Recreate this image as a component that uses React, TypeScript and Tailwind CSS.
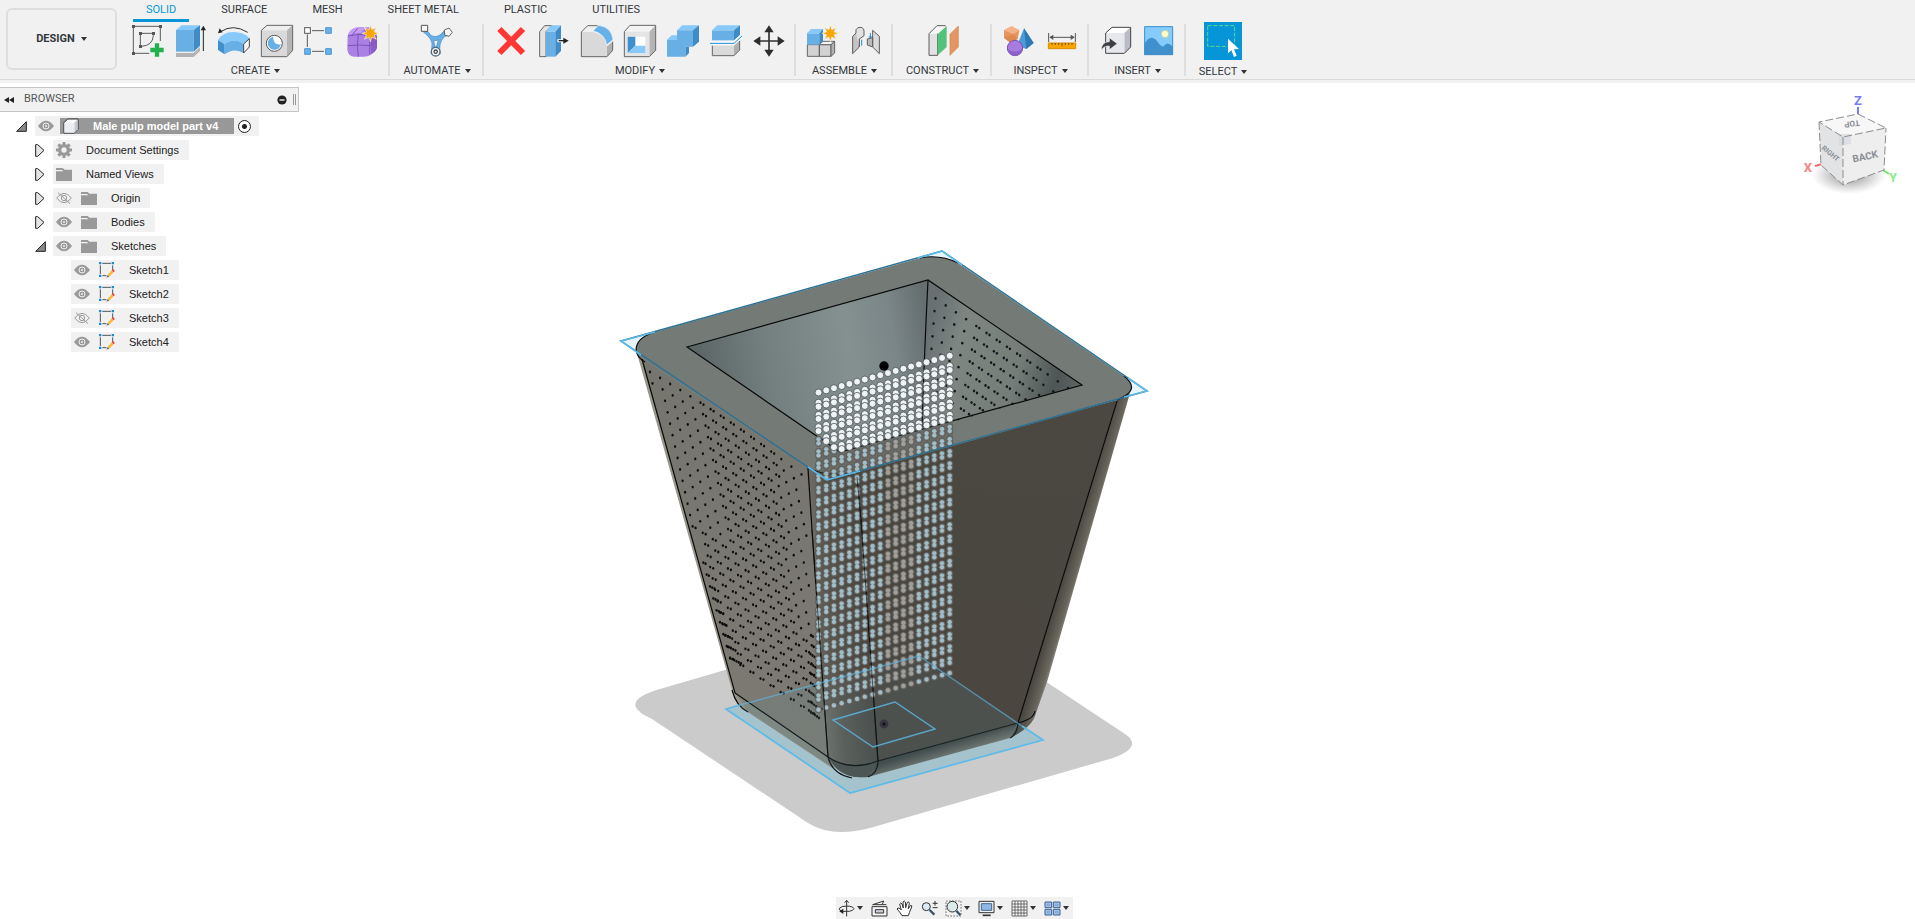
import React from 'react';

interface IconProps {
  children: React.ReactNode;
}

// Ribbon icons are drawn on a 96 unit grid and shown at 32px
const RibbonIcon: React.FC<IconProps> = ({ children }) => (
  <svg viewBox="0 0 96 96" className="size-8 overflow-visible" aria-hidden="true">
    {children}
  </svg>
);

const Caret = () => (
  <svg viewBox="0 0 6 4" className="h-1 w-1.5 shrink-0" aria-hidden="true">
    <path d="M0 0H6L3 4Z" fill="#333" />
  </svg>
);

const starPoints = (cx: number, cy: number, outer: number, inner: number) =>
  Array.from({ length: 16 }, (_, i) => {
    const r = i % 2 === 0 ? outer : inner;
    const a = (i * Math.PI) / 8 - Math.PI / 2;
    return `${cx + r * Math.cos(a)},${cy + r * Math.sin(a)}`;
  }).join(' ');

const Star = ({ cx, cy }: { cx: number; cy: number }) => (
  <polygon points={starPoints(cx, cy, 25, 12)} fill="#f9a602" stroke="#f1f1f1" strokeWidth="2" />
);

const SketchTool = () => (
  <RibbonIcon>
    <path d="M8 4H85V48M4 8V85H52M25 60V25H64V32Q62 62 28 64" fill="none" stroke="#5c5c5c" strokeWidth="3" />
    <path d="M0 0h9v9h-9zM81 0h9v9h-9zM0 81h9v9h-9zM21 21h9v9h-9zM60 21h9v9h-9zM21 60h9v9h-9z" fill="#555" />
    <path d="M75 54V96M54 75H96" stroke="#f1f1f1" strokeWidth="17" />
    <path d="M75 55V95M55 75H95" stroke="#23b14d" strokeWidth="13" />
  </RibbonIcon>
);

const ExtrudeTool = () => (
  <RibbonIcon>
    <path d="M3 84H56L75 66V78L56 96H3Z" fill="#b3b3b3" />
    <path d="M3 15H56V80H3Z" fill="#67afe5" />
    <path d="M3 15L20 1H75L56 15Z" fill="#87c9fb" />
    <path d="M56 15L75 1V62L56 80Z" fill="#3f8bc8" />
    <path d="M85 78V12" stroke="#222" strokeWidth="3" />
    <path d="M85 2L77 16H93Z" fill="#222" />
  </RibbonIcon>
);

const RevolveTool = () => (
  <RibbonIcon>
    <path d="M8 20Q45 -5 89 22" fill="none" stroke="#333" strokeWidth="3" />
    <path d="M0 25L5 10L14 22Z" fill="#222" />
    <path d="M0 45Q12 22 46 21Q78 21 95 40L77 57Q48 36 20 58Z" fill="#87c9fb" />
    <path d="M0 45L20 58V88L0 75Z" fill="#3f8fcf" />
    <path d="M20 58Q48 36 77 57V85Q50 66 20 88Z" fill="#67afe5" />
    <path d="M77 57L94 41V66L77 84Z" fill="#f7f7f7" stroke="#444" strokeWidth="3" />
  </RibbonIcon>
);

const HoleTool = () => (
  <RibbonIcon>
    <path d="M1 16L18 1H95L78 16Z" fill="#eee" />
    <path d="M78 16L95 1V76L78 95Z" fill="#b5b5b5" />
    <path d="M1 16H78V95H1Z" fill="#d9d9d9" />
    <path d="M1 16L18 1H95V76L78 95H1Z" fill="none" stroke="#666" strokeWidth="3" />
    <circle cx="40" cy="55" r="24" fill="#fff" stroke="#555" strokeWidth="3" />
    <path d="M36 35A20 20 0 1 0 60 58Q38 62 36 35Z" fill="#67afe5" />
  </RibbonIcon>
);

const PatternTool = () => (
  <RibbonIcon>
    <path d="M24 17H60M10 28V66M24 79H60" stroke="#5c5c5c" strokeWidth="3" />
    <rect x="2" y="8" width="17" height="17" fill="#fff" stroke="#555" strokeWidth="3" />
    <path d="M65 8h17v17h-17zM2 71h17v17h-17zM65 71h17v17h-17z" fill="#67b1ec" stroke="#4d96d0" strokeWidth="3" />
  </RibbonIcon>
);

const FormTool = () => (
  <RibbonIcon>
    <path d="M2 34Q4 20 16 12Q26 6 40 7H66Q84 10 90 34V68Q88 78 76 86Q64 96 46 95H22Q4 94 1 74Z" fill="#ab80e4" />
    <path d="M70 34Q88 26 90 34V68Q86 80 72 86Z" fill="#8a5cc4" />
    <path d="M4 30Q8 14 26 8H62Q48 12 40 24Q16 24 4 30Z" fill="#c49cf6" />
    <path d="M3 33Q36 24 68 32V88M34 26Q28 60 34 95M2 62Q40 58 70 62L90 48M52 26L62 10M16 29L32 10" fill="none" stroke="#7f52b8" strokeWidth="3" />
    <Star cx={70} cy={25} />
  </RibbonIcon>
);

const AutomateTool = () => (
  <RibbonIcon>
    <path d="M8 14Q22 16 28 30Q44 40 60 28Q68 14 80 16L84 30Q68 32 62 46Q56 56 56 72L58 86H30L32 72Q36 54 28 42Q20 30 8 22Z" fill="#67afe5" stroke="#4288bf" strokeWidth="2" />
    <path d="M38 46Q44 48 52 45L46 66H42Z" fill="#f1f1f1" stroke="#4288bf" strokeWidth="2" />
    <path d="M1 1H20V19H1Z" fill="#f6f6f6" stroke="#555" strokeWidth="3" />
    <path d="M70 15L84 9L94 22L84 34L71 30Z" fill="#f6f6f6" stroke="#666" strokeWidth="3" />
    <circle cx="44" cy="80" r="13" fill="#fff" stroke="#4b6b85" strokeWidth="4" />
    <circle cx="44" cy="80" r="5" fill="none" stroke="#444" strokeWidth="4" />
  </RibbonIcon>
);

const DeleteTool = () => (
  <RibbonIcon>
    <path d="M13 12L84 84M84 12L13 84" stroke="#fd3735" strokeWidth="18" />
  </RibbonIcon>
);

const PressPullTool = () => (
  <RibbonIcon>
    <path d="M5 20L20 2H42L24 20V95H5Z" fill="#e3e3e3" stroke="#666" strokeWidth="3" />
    <path d="M24 20H52V95H24Z" fill="#67afe5" />
    <path d="M24 20L40 1H69L52 20Z" fill="#87c9fb" />
    <path d="M52 20L69 1V78L52 95Z" fill="#3f8bc8" />
    <path d="M58 47H84" stroke="#f8f8f8" strokeWidth="9" />
    <path d="M62 47H80" stroke="#222" strokeWidth="4" />
    <path d="M76 38L92 47L76 56Z" fill="#222" />
  </RibbonIcon>
);

const FilletTool = () => (
  <RibbonIcon>
    <path d="M1 20L18 2H50L34 22Z" fill="#f0f0f0" />
    <path d="M1 21H34Q74 28 78 64V95H1Z" fill="#d9d9d9" />
    <path d="M78 64L95 50V76L78 95Z" fill="#b0b0b0" />
    <path d="M50 2H20L1 21V95H78L95 76V50" fill="none" stroke="#666" strokeWidth="3" />
    <path d="M36 18L52 1Q92 6 96 44L77 60Q72 26 36 18Z" fill="#67b1e8" stroke="#f8f8f8" strokeWidth="2" />
  </RibbonIcon>
);

const ShellTool = () => (
  <RibbonIcon>
    <path d="M1 20L18 1H95L76 20Z" fill="#f3f3f3" />
    <path d="M76 20L95 1V76L76 95Z" fill="#b5b5b5" />
    <path d="M1 20H76V95H1Z" fill="#e4e4e4" />
    <path d="M1 20L18 1H95V76L76 95H1Z" fill="none" stroke="#666" strokeWidth="3" />
    <path d="M11 35H64V84H11Z" fill="#fff" />
    <path d="M11 35H34V62L11 84Z" fill="#3f8fcf" />
    <path d="M11 84L34 62H64V84Z" fill="#87c9fb" />
  </RibbonIcon>
);

const CombineTool = () => (
  <RibbonIcon>
    <path d="M30 16L46 1H96L78 16ZM0 44L14 31H30V44Z" fill="#87c9fb" />
    <path d="M78 16L96 1V50L78 65ZM55 65H66V84L55 95Z" fill="#3f8bc8" />
    <path d="M0 44H30V16H78V65H55V95H0Z" fill="#67afe5" />
  </RibbonIcon>
);

const SplitTool = () => (
  <RibbonIcon>
    <path d="M6 62H72V92H6Z" fill="#dadada" />
    <path d="M72 62L89 46V74L72 92Z" fill="#b0b0b0" />
    <path d="M7 62V92H72L89 75V48" fill="none" stroke="#666" strokeWidth="3" />
    <path d="M6 16H72V46H6Z" fill="#67afe5" />
    <path d="M6 16L22 1H90L72 16Z" fill="#87c9fb" />
    <path d="M72 16L90 1V30L72 46Z" fill="#3f8bc8" />
    <path d="M0 54H72L96 32" fill="none" stroke="#fafafa" strokeWidth="10" />
    <path d="M0 55H72L96 33" fill="none" stroke="#1a8ed8" strokeWidth="3" />
  </RibbonIcon>
);

const MoveTool = () => (
  <RibbonIcon>
    <path d="M48 14V82M14 48H82" stroke="#333" strokeWidth="5" />
    <path d="M48 1L62 22H34ZM48 95L62 74H34ZM1 48L22 34V62ZM95 48L74 34V62Z" fill="#2e2e2e" />
  </RibbonIcon>
);

const ComponentTool = () => (
  <RibbonIcon>
    <path d="M1 59H37V94H1ZM37 59H72V94H37Z" fill="#d2d2d2" stroke="#666" strokeWidth="3" />
    <path d="M37 59L48 49H83L72 59Z" fill="#f3f3f3" stroke="#666" strokeWidth="3" />
    <path d="M72 59L83 49V84L72 94Z" fill="#b0b0b0" stroke="#666" strokeWidth="3" />
    <path d="M0 25H37V59H0Z" fill="#67afe5" />
    <path d="M0 25L12 12H48L37 25Z" fill="#87c9fb" />
    <path d="M37 25L48 12V47L37 59Z" fill="#3f8bc8" />
    <Star cx={70} cy={25} />
  </RibbonIcon>
);

const JointTool = () => (
  <RibbonIcon>
    <path d="M8 34L28 14V66L8 86Z" fill="#c4c4c4" stroke="#5c5c5c" strokeWidth="3" />
    <path d="M18 24V14Q22 6 32 7Q43 9 42 20V32L28 42V66" fill="#e1e1e1" stroke="#5c5c5c" strokeWidth="3" />
    <path d="M68 16L88 34V86L68 66Z" fill="#dcdcdc" stroke="#5c5c5c" strokeWidth="3" />
    <path d="M68 38L52 42V60L68 66Z" fill="#bcbcbc" stroke="#5c5c5c" strokeWidth="3" />
    <path d="M35 44V62M61 24V40M56 36H66" stroke="#1a8ed8" strokeWidth="3" />
  </RibbonIcon>
);

const ConstructTool = () => (
  <RibbonIcon>
    <path d="M6 26L30 2H56L32 26V91H6Z" fill="#e2e2e2" />
    <path d="M6 26H32L56 2H30Z" fill="#f7f7f7" />
    <path d="M32 26V91H6V26L30 2H56" fill="none" stroke="#5c5c5c" strokeWidth="3" />
    <path d="M32 28L59 3V66L32 91Z" fill="#51c37b" />
    <path d="M69 28L94 3V66L69 91Z" fill="#e59561" stroke="#cf8553" strokeWidth="2" />
  </RibbonIcon>
);

const InterferenceTool = () => (
  <RibbonIcon>
    <path d="M26 4L49 16L44 42L20 52L3 38V16Z" fill="#e8965f" />
    <path d="M26 4L49 16L31 27L3 16Z" fill="#f5b287" />
    <path d="M31 27L44 42L20 52L3 38Z" fill="#dd8950" />
    <path d="M63 10L92 54L70 72L42 62Z" fill="#4b9bd8" />
    <path d="M63 10L92 54L70 72Z" fill="#2e78b4" />
    <circle cx="36" cy="69" r="23" fill="#a87be0" stroke="#7a4fb0" strokeWidth="3" />
    <path d="M14 73Q36 86 58 73Q54 92 36 92Q18 92 14 73Z" fill="#8d60c8" />
  </RibbonIcon>
);

const MeasureTool = () => (
  <RibbonIcon>
    <path d="M8 24V51M88 24V51M12 37H84" stroke="#555" strokeWidth="3" />
    <path d="M10 37L22 29V45ZM86 37L74 29V45Z" fill="#555" />
    <path d="M7 54H89V71H7Z" fill="#f9a602" stroke="#d98c00" strokeWidth="3" />
    <path d="M18 54V60M28 54V60M38 54V60M48 54V64M58 54V60M68 54V60M78 54V60" stroke="#7a5400" strokeWidth="3" />
  </RibbonIcon>
);

const InsertTool = () => (
  <RibbonIcon>
    <path d="M17 24L36 7H92L73 24Z" fill="#fff" />
    <path d="M73 24L92 7V66L73 85Z" fill="#b9bcc4" />
    <path d="M17 24H73V85H17Z" fill="#e6e8ee" />
    <path d="M17 24L36 7H92V66L73 85H17Z" fill="none" stroke="#444" strokeWidth="3" />
    <path d="M4 76Q4 50 28 50V38L52 56L28 74V63Q12 62 4 76Z" fill="#3c3f44" stroke="#f1f1f1" strokeWidth="2" />
  </RibbonIcon>
);

const CanvasTool = () => (
  <RibbonIcon>
    <path d="M4 4H90V90H4Z" fill="#85cbfc" />
    <path d="M4 56Q26 20 48 56Q56 66 62 64Q74 46 90 66V90H4Z" fill="#3f90cd" />
    <circle cx="66" cy="27" r="11" fill="#fdfbc8" stroke="#b5c98c" strokeWidth="2" />
    <path d="M5 5H89V89H5Z" fill="none" stroke="#3f90cd" strokeWidth="3" />
  </RibbonIcon>
);

const SelectTool = () => (
  <svg viewBox="0 0 114 114" className="size-[38px] bg-[#0696d7]" aria-hidden="true">
    <path d="M11 11H92V73H11Z" fill="none" stroke="#5fd68b" strokeWidth="3" strokeDasharray="12 5" />
    <path d="M72 50V94L82 85L90 105L98 101L90 82L105 81Z" fill="#fff" />
  </svg>
);

interface ToolGroup {
  label: string;
  width: string;
  tools: { name: string; icon: React.ReactNode }[];
}

const groups: ToolGroup[] = [
  {
    label: 'CREATE',
    width: 'min-w-[269px]',
    tools: [
      { name: 'Create Sketch', icon: <SketchTool /> },
      { name: 'Extrude', icon: <ExtrudeTool /> },
      { name: 'Revolve', icon: <RevolveTool /> },
      { name: 'Hole', icon: <HoleTool /> },
      { name: 'Rectangular Pattern', icon: <PatternTool /> },
      { name: 'Create Form', icon: <FormTool /> },
    ],
  },
  { label: 'AUTOMATE', width: 'w-[94px]', tools: [{ name: 'Automated Modeling', icon: <AutomateTool /> }] },
  {
    label: 'MODIFY',
    width: 'min-w-[312px]',
    tools: [
      { name: 'Delete', icon: <DeleteTool /> },
      { name: 'Press Pull', icon: <PressPullTool /> },
      { name: 'Fillet', icon: <FilletTool /> },
      { name: 'Shell', icon: <ShellTool /> },
      { name: 'Combine', icon: <CombineTool /> },
      { name: 'Split Body', icon: <SplitTool /> },
      { name: 'Move', icon: <MoveTool /> },
    ],
  },
  {
    label: 'ASSEMBLE',
    width: 'w-[97px]',
    tools: [
      { name: 'New Component', icon: <ComponentTool /> },
      { name: 'Joint', icon: <JointTool /> },
    ],
  },
  { label: 'CONSTRUCT', width: 'w-[99px]', tools: [{ name: 'Offset Plane', icon: <ConstructTool /> }] },
  {
    label: 'INSPECT',
    width: 'w-[97px]',
    tools: [
      { name: 'Interference', icon: <InterferenceTool /> },
      { name: 'Measure', icon: <MeasureTool /> },
    ],
  },
  {
    label: 'INSERT',
    width: 'w-[97px]',
    tools: [
      { name: 'Insert Derive', icon: <InsertTool /> },
      { name: 'Canvas', icon: <CanvasTool /> },
    ],
  },
];

const tabs = ['SOLID', 'SURFACE', 'MESH', 'SHEET METAL', 'PLASTIC', 'UTILITIES'];

const Toolbar = () => (
  <header className="bg-[#f1f1f1] pb-[3px] font-['Roboto',sans-serif] text-[11px] text-[#33373c]">
    <div className="flex h-20 border-b border-[#dadada] pl-1.5">
      <button className="mt-2 flex h-[62px] w-[111px] items-center justify-center gap-1.5 rounded-md border-2 border-[#dedede] font-bold">
        DESIGN <Caret />
      </button>
      <div className="ml-1 flex flex-col">
        <nav className="flex h-6 items-start gap-[19px] pl-3">
          {tabs.map((tab, i) => (
            <button
              key={tab}
              className={
                i === 0
                  ? 'flex h-[22px] items-start border-b-[3px] border-[#0696d7] px-[13px] pt-1 leading-3 text-[#0696d7]'
                  : 'flex h-[22px] items-start px-[13px] pt-1 leading-3'
              }
            >
              {tab}
            </button>
          ))}
        </nav>
        <div className="flex h-[52px]">
          {groups.map((group) => (
            <div key={group.label} className={`flex flex-col items-center border-r-2 border-[#dedede] pt-px pl-0.5 ${group.width}`}>
              <div className="flex gap-[11px]">
                {group.tools.map((tool) => (
                  <button key={tool.name} aria-label={tool.name}>
                    {tool.icon}
                  </button>
                ))}
              </div>
              <button className="mt-1.5 flex items-center gap-1 leading-4">
                {group.label} <Caret />
              </button>
            </div>
          ))}
          <div className="flex w-[74px] flex-col items-center">
            <button aria-label="Select" className="-mt-0.5">
              <SelectTool />
            </button>
            <button className="mt-1 flex items-center gap-1 leading-4">
              SELECT <Caret />
            </button>
          </div>
        </div>
      </div>
    </div>
  </header>
);

const EyeIcon = ({ hidden }: { hidden?: boolean }) => (
  <svg viewBox="0 0 48 36" className="h-3 w-4 shrink-0" aria-hidden="true">
    {hidden ? (
      <g fill="none" stroke="#999" strokeWidth="3">
        <path d="M2 18Q24 -10 46 18Q24 46 2 18Z" />
        <circle cx="24" cy="18" r="8" />
        <path d="M6 2L42 35" />
      </g>
    ) : (
      <>
        <path d="M0 18Q24 -14 48 18Q24 50 0 18Z" fill="#999" />
        <circle cx="24" cy="18" r="9" fill="none" stroke="#f1f1f1" strokeWidth="3" />
        <circle cx="24" cy="18" r="3" fill="#f1f1f1" />
      </>
    )}
  </svg>
);

const FolderIcon = () => (
  <svg viewBox="0 0 48 39" className="h-[13px] w-4 shrink-0" aria-hidden="true">
    <path d="M0 0H20L26 5H48V39H0V10H22L18 6H0Z" fill="#999" />
  </svg>
);

const GearIcon = () => (
  <svg viewBox="0 0 48 48" className="size-4 shrink-0" aria-hidden="true">
    <circle cx="24" cy="24" r="13" fill="none" stroke="#999" strokeWidth="10" />
    <path d="M24 0V10M24 38V48M0 24H10M38 24H48M7 7L14 14M34 34L41 41M41 7L34 14M7 41L14 34" stroke="#999" strokeWidth="9" />
  </svg>
);

const SketchIcon = () => (
  <svg viewBox="0 0 48 48" className="size-4 shrink-0" aria-hidden="true">
    <path d="M4 10V36M10 4H36M41 10V24M10 41H22" stroke="#555" strokeWidth="3" />
    <path d="M0 0H7V7H0ZM38 0H45V7H38ZM0 38H7V45H0Z" fill="#128de0" />
    <path d="M26 38L38 25L44 31L31 44Z" fill="#fdb93e" />
    <path d="M38 25L42 21L48 27L44 31Z" fill="#ee3f4e" />
    <path d="M26 38L31 44L22 47Z" fill="#777" />
  </svg>
);

const Expander = ({ open }: { open?: boolean }) =>
  open ? (
    <svg viewBox="0 0 33 33" className="size-[11px]" aria-hidden="true">
      <path d="M2 31L31 2V31Z" fill="#888" stroke="#222" strokeWidth="3" />
    </svg>
  ) : (
    <svg viewBox="0 0 30 39" className="h-[13px] w-2.5" aria-hidden="true">
      <path d="M2 2H8L27 19L8 37H2Z" fill="#e4e4e4" stroke="#222" strokeWidth="3" />
    </svg>
  );

interface TreeNode {
  label: string;
  icon: 'gear' | 'folder';
  eye?: 'shown' | 'hidden';
  open?: boolean;
}

const nodes: TreeNode[] = [
  { label: 'Document Settings', icon: 'gear' },
  { label: 'Named Views', icon: 'folder' },
  { label: 'Origin', icon: 'folder', eye: 'hidden' },
  { label: 'Bodies', icon: 'folder', eye: 'shown' },
  { label: 'Sketches', icon: 'folder', eye: 'shown', open: true },
];

const sketches = [
  { label: 'Sketch1', hidden: false },
  { label: 'Sketch2', hidden: false },
  { label: 'Sketch3', hidden: true },
  { label: 'Sketch4', hidden: false },
];

const BrowserPanel = () => (
  <aside className="relative w-[299px] pt-1">
    <div className="flex h-[25px] items-center border border-l-0 border-[#c4c4c4] bg-[#f1f1f1] pr-0.5 pl-1 font-['Roboto',sans-serif] text-[11px] text-[#555]">
      <button aria-label="Collapse browser">
        <svg viewBox="0 0 10 6" className="h-1.5 w-2.5" aria-hidden="true">
          <path d="M5 0V6L0 3ZM10 0V6L5 3Z" fill="#222" />
        </svg>
      </button>
      <h2 className="ml-2.5 flex-1">BROWSER</h2>
      <button aria-label="Browser options">
        <svg viewBox="0 0 10 10" className="size-2.5" aria-hidden="true">
          <circle cx="5" cy="5" r="4.6" fill="#222" />
          <path d="M2.5 5H7.5" stroke="#f1f1f1" strokeWidth="1.4" />
        </svg>
      </button>
      <div className="ml-1.5 h-[11px] w-[3px] border-x border-[#999]" />
    </div>

    <ul className="mt-1 flex flex-col gap-1 font-['Liberation_Sans',Arial,sans-serif] text-[11px] text-[#222]">
      <li className="flex h-5 items-center pl-4">
        <button aria-label="Toggle root" className="w-[19px]">
          <Expander open />
        </button>
        <div className="flex h-5 items-center bg-[#f1f1f1] pr-2 pl-[3px]">
          <EyeIcon />
          <div className="ml-1.5 flex h-4 w-[174px] items-center bg-[#989898] pl-[3px] font-bold text-white">
            <svg viewBox="0 0 48 48" className="size-4" aria-hidden="true">
              <path d="M3 14L14 3H45V34L34 45H3Z" fill="#fff" stroke="#333" strokeWidth="3" />
              <path d="M34 14L44 4V34L34 44Z" fill="#c3c7d2" />
              <path d="M4 15H34V44H4Z" fill="#eceef4" />
            </svg>
            <span className="ml-3.5 whitespace-nowrap">Male pulp model part v4</span>
          </div>
          <input
            type="radio"
            defaultChecked
            aria-label="Activate component"
            className="ml-1 size-[13px] appearance-none rounded-full border border-[#222] bg-[radial-gradient(circle,#222_2px,#fff_3px)]"
          />
        </div>
      </li>
      {nodes.map((node) => (
        <li key={node.label} className="flex h-5 items-center pl-[35px]">
          <button aria-label={`Toggle ${node.label}`} className="w-[18px]">
            <Expander open={node.open} />
          </button>
          <div className="flex h-5 items-center bg-[#f1f1f1] pr-2.5 pl-[3px]">
            {node.eye && (
              <span className="mr-[9px]">
                <EyeIcon hidden={node.eye === 'hidden'} />
              </span>
            )}
            {node.icon === 'gear' ? <GearIcon /> : <FolderIcon />}
            <span className="ml-3.5">{node.label}</span>
          </div>
        </li>
      ))}
      {sketches.map((sketch) => (
        <li key={sketch.label} className="flex h-5 items-center pl-[71px]">
          <div className="flex h-5 items-center bg-[#f1f1f1] pr-2.5 pl-[3px]">
            <EyeIcon hidden={sketch.hidden} />
            <span className="ml-[9px]">
              <SketchIcon />
            </span>
            <span className="ml-3.5">{sketch.label}</span>
          </div>
        </li>
      ))}
    </ul>
  </aside>
);

interface Point {
  x: number;
  y: number;
}

// Perforations on the left outer wall. Each row runs between the two wall edges,
// the far side of the hole shows as a second dot away from the edges.
const wallHoles: Point[] = [];
for (let row = 0; row < 25; row++) {
  const v = row / 24;
  const left = { x: 650 + 80 * v, y: 372 + 286 * v };
  const right = { x: 801 + 18 * v, y: 474 + 244 * v };
  const slope = (right.y - left.y) / (right.x - left.x);
  for (let col = -3; col < 18; col++) {
    const x = 650 + col * 10.1 + row * 2.5;
    if (x < left.x - 1 || x > right.x + 1) continue;
    const u = (x - left.x) / (right.x - left.x);
    const y = left.y + (x - left.x) * slope - Math.sin(u * Math.PI) * 4 * (1 - v);
    wallHoles.push({ x, y });
    if ((u > 0.3 || v > 0.5) && (u < 0.82 || v > 0.7)) wallHoles.push({ x: x + 3, y: y + 1 + (1 - v) });
  }
  // rows bunch up against both edges near the base
  if (row > 15) {
    for (let k = 0; k < (row - 13) / 2; k++) {
      wallHoles.push({ x: left.x + k * 2.2, y: left.y + k * 1.1 });
      wallHoles.push({ x: right.x - k * 2, y: right.y - k * 1.5 });
    }
  }
}

// Perforations seen through the opening on the right inner wall
const innerHoles: Point[] = [];
for (let row = 0; row < 11; row++) {
  for (let col = 0; col < 14; col++) {
    const x = 935.5 + col * 10.2 - row * (1 + col * 0.3);
    const y = 298.5 + col * 6.9 + row * (12.6 - col * 0.2);
    innerHoles.push({ x, y });
    if (col > 3 && col < 11) innerHoles.push({ x: x + 3, y: y + 2 });
  }
}

// Profile circles of the sketch standing in the middle of the part
const profiles: (Point & { lit: boolean; grey: boolean })[] = [];
for (let row = 0; row < 27; row++) {
  for (let col = 0; col < 18; col++) {
    const x = 818.5 + col * 7.72;
    const single = row === 0 || row === 26;
    for (const drop of single ? [0] : [-2, 2]) {
      const y = 392.5 - col * 2.16 + row * 12.2 + drop;
      const edge = x < 840 ? 452 - (840 - x) * 0.686 : 452 - (x - 840) * 0.277;
      profiles.push({ x, y, lit: y < edge, grey: col > 8 && col < 13 });
    }
  }
}
const litProfiles = profiles.filter((p) => p.lit);
const dimProfiles = profiles.filter((p) => !p.lit);

const Model = () => (
  <svg viewBox="0 83 1915 836" preserveAspectRatio="xMidYMid slice" className="absolute inset-0 size-full" role="img" aria-label="Male pulp model part">
    <defs>
      <linearGradient id="backWall" gradientUnits="userSpaceOnUse" x1="700" y1="370" x2="928" y2="330">
        <stop offset="0" stopColor="#5c6666" />
        <stop offset="0.3" stopColor="#748080" />
        <stop offset="0.65" stopColor="#849190" />
        <stop offset="0.85" stopColor="#7a8687" />
        <stop offset="1" stopColor="#666e70" />
      </linearGradient>
      <linearGradient id="innerWall" gradientUnits="userSpaceOnUse" x1="925" y1="340" x2="1080" y2="385">
        <stop offset="0" stopColor="#687072" />
        <stop offset="0.2" stopColor="#7e8682" />
        <stop offset="0.6" stopColor="#757d79" />
        <stop offset="0.85" stopColor="#4d5654" />
        <stop offset="1" stopColor="#5d6664" />
      </linearGradient>
      <linearGradient id="outerWall" gradientUnits="userSpaceOnUse" x1="0" y1="400" x2="0" y2="760">
        <stop offset="0" stopColor="#76766f" />
        <stop offset="1" stopColor="#7d7a72" />
      </linearGradient>
      <linearGradient id="cornerWall" gradientUnits="userSpaceOnUse" x1="811" y1="600" x2="868" y2="596">
        <stop offset="0" stopColor="#75736b" />
        <stop offset="0.4" stopColor="#5b5851" />
        <stop offset="1" stopColor="#47443f" />
      </linearGradient>
      <linearGradient id="frontWall" gradientUnits="userSpaceOnUse" x1="980" y1="430" x2="960" y2="720">
        <stop offset="0" stopColor="#4a4841" />
        <stop offset="1" stopColor="#4b4640" />
      </linearGradient>
      <linearGradient id="rightEdge" gradientUnits="userSpaceOnUse" x1="1073" y1="545" x2="1090" y2="550">
        <stop offset="0" stopColor="#4c4942" />
        <stop offset="0.6" stopColor="#68665d" />
        <stop offset="1" stopColor="#a2a198" />
      </linearGradient>
      <linearGradient id="bottomEdge" gradientUnits="userSpaceOnUse" x1="945" y1="744" x2="949" y2="757">
        <stop offset="0" stopColor="#3e4240" />
        <stop offset="1" stopColor="#75756c" />
      </linearGradient>
      <clipPath id="innerWallClip">
        <path d="M928 280L1082 385L924 430Z" />
      </clipPath>
      <clipPath id="outerWallClip">
        <path d="M640 355L808 468L812 530L828 757L735 693Z" />
      </clipPath>
    </defs>

    {/* ground shadow */}
    <path d="M725 670L660 689Q615 702 652 719L808 823Q832 838 870 828L1113 758Q1146 746 1122 732L1045 681Z" fill="#cbcbcb" />

    {/* sketch planes showing past the part */}
    <path d="M726 709L850 793L1043 740L919 656Z" fill="#b2cbd4" />
    <path d="M621 341L942 251L1147 391L827 480Z" fill="#e6f5fc" />

    {/* outer walls */}
    <path d="M636 350L732 690Q736 706 748 712L832 768L840 700L812 466Z" fill="#99978c" />
    <path d="M640 355L808 468L812 530L828 757L735 693Z" fill="url(#outerWall)" />
    <path d="M735 693L828 757L836 770L748 712Z" fill="#85877f" />
    <path d="M806 464L857 474L878 761L872 776Q840 782 828 757L812 530Z" fill="url(#cornerWall)" />
    <path d="M855 470L1117 400L1018 723L878 761Z" fill="url(#frontWall)" />
    <path d="M1117 400L1130 393L1047 682L1036 713Q1033 727 1010 738L1018 723Z" fill="url(#rightEdge)" />
    <path d="M878 761L1018 723L1010 738L868 777Z" fill="url(#bottomEdge)" />
    <path d="M828 757Q850 770 878 761L868 777Q842 780 828 757Z" fill="#4a4c49" />

    <g clipPath="url(#outerWallClip)" fill="#0c0c0c">
      {wallHoles.map((p, i) => (
        <ellipse key={i} cx={p.x} cy={p.y} rx="1.1" ry="1.4" />
      ))}
    </g>

    {/* top rim and opening */}
    <path d="M655 332L920 258Q940 254 958 263L1124 376Q1142 390 1117 400L860 472Q832 480 808 468L645 362C632 354 632 339 655 332Z" fill="#747a76" />
    <path d="M687 347L928 280L924 430L840 452Z" fill="url(#backWall)" />
    <path d="M928 280L1082 385L922 430Z" fill="url(#innerWall)" />
    <g clipPath="url(#innerWallClip)" fill="#10171a">
      {innerHoles.map((p, i) => (
        <ellipse key={i} cx={p.x} cy={p.y} rx="1.2" ry="1.4" />
      ))}
    </g>

    {/* model edges */}
    <g fill="none" stroke="#0a0a0a" strokeWidth="1.2">
      <path d="M687 347L928 280L1082 385L840 452ZM928 280Q924 360 922 428" />
      <path d="M642 359L735 693L828 757Q850 772 878 761L1018 723L1117 401" />
      <path d="M808 468Q810 500 812 530L828 757Q832 774 852 778M857 477L861 520L870 647L878 761Q878 773 868 777" />
      <path d="M655 332C632 339 632 354 645 362M920 258Q940 254 958 263M1124 376Q1142 390 1117 400M808 468Q828 478 858 472" />
      <path d="M732 690Q736 706 748 712M1018 723Q1034 719 1035 711M1018 723Q1017 735 1010 738" />
    </g>

    {/* tint of the base plane seen through the part */}
    <path d="M726 709L850 793L1043 740L919 656Z" fill="#5f93a3" fillOpacity="0.14" />

    <path d="M816 450L953 414V672L816 710Z" fill="#433e3a" fillOpacity="0.25" />
    <g fill="#8f8f8b" fillOpacity="0.7" stroke="#54514c" strokeOpacity="0.7">
      {dimProfiles.map((p, i) => (
        <circle key={i} cx={p.x} cy={p.y} r="3.2" />
      ))}
    </g>
    {dimProfiles.map((p, i) => (
      <circle key={i} cx={p.x} cy={p.y} r="2.1" fill={p.grey ? '#aaa9a6' : '#a9cfde'} fillOpacity="0.8" />
    ))}
    <g fill="#eef3f5" stroke="#4a5254" strokeOpacity="0.8">
      {litProfiles.map((p, i) => (
        <circle key={i} cx={p.x} cy={p.y} r="3.5" />
      ))}
    </g>
    <path d="M812 530L828 757M857 477L861 520L870 647L878 761" fill="none" stroke="#0a0a0a" strokeOpacity="0.6" />

    {/* sketch plane outlines */}
    <g fill="none" stroke="#5cbbe8">
      <path d="M621 341L942 251L1147 391L827 480Z" stroke="#2b7194" strokeWidth="1.4" />
      <path d="M655 332L621 341L641 355M918 258L942 251L962 265M1128 378L1147 391L1124 397M808 467L827 480L860 471" strokeWidth="1.6" />
      <path d="M739 718L726 709L740 705M726 709L850 793L1043 740L1022 726" strokeWidth="1.7" />
      <path d="M740 705L919 656L1022 726" strokeOpacity="0.6" strokeWidth="1.4" />
      <path d="M833 720L895 702L935 729L873 747Z" strokeOpacity="0.8" strokeWidth="1.4" />
    </g>
    <circle cx="884" cy="366" r="4.7" fill="#000" />
    <circle cx="884" cy="724" r="4.4" fill="#35343f" />
    <circle cx="884" cy="724" r="1.5" fill="#111" />
  </svg>
);

const ViewCube = () => (
  <svg viewBox="0 3 135 127" className="h-[127px] w-[135px] font-['Roboto',sans-serif]" role="img" aria-label="View cube">
    <defs>
      <radialGradient id="cubeShadow">
        <stop offset="0" stopColor="#777" stopOpacity="0.9" />
        <stop offset="1" stopColor="#999" stopOpacity="0" />
      </radialGradient>
    </defs>
    <ellipse cx="69" cy="95" rx="37" ry="19" fill="url(#cubeShadow)" />
    <path d="M78 34V27" stroke="#7b7bf5" strokeWidth="2" />
    <path d="M42 84L35 86" stroke="#f56b6b" strokeWidth="2" />
    <path d="M103 90L109 94" stroke="#6be86b" strokeWidth="2" />
    <path d="M78 34L106 48L63 57L39 42Z" fill="#f7f7f7" />
    <path d="M39 42L63 57V105L41 85Z" fill="#e2e3e4" />
    <path d="M63 57L106 48L104 90L63 105Z" fill="#eeeeef" />
    <path d="M59 54L71 54V64L59 66Z" fill="#d4d8de" fillOpacity="0.7" />
    <path d="M78 34L106 48L63 57L39 42ZM39 42L41 85L63 105L104 90L106 48M63 57V105" fill="none" stroke="#8d8d8d" strokeDasharray="8 3" />
    <g fill="#8a8e94" fontWeight="bold" textAnchor="middle">
      <text x="85" y="80" fontSize="10" transform="rotate(-12 85 76)">BACK</text>
      <text x="51" y="76" fontSize="7" transform="rotate(40 51 73)">RIGHT</text>
      <text x="72" y="47" fontSize="8" transform="rotate(172 72 44)">TOP</text>
    </g>
    <g fontSize="13" fontWeight="bold" textAnchor="middle">
      <text x="78" y="25" fill="#7b7bf5">Z</text>
      <text x="28" y="92" fill="#f98080">X</text>
      <text x="113" y="102" fill="#86ef86">Y</text>
    </g>
  </svg>
);

// Navigation icons are drawn on a 51 unit grid and shown at 17px
const NavIcon: React.FC<IconProps> = ({ children }) => (
  <svg viewBox="0 0 51 51" className="size-[17px]" fill="none" stroke="#333" strokeWidth="3" aria-hidden="true">
    {children}
  </svg>
);

const navTools = [
  {
    name: 'Orbit',
    caret: true,
    icon: (
      <NavIcon>
        <path d="M26 2V49M12 34Q2 30 4 25Q10 18 26 18Q46 19 48 26Q46 32 34 34H10" />
        <path d="M4 34L16 26V42Z" fill="#222" stroke="none" />
        <path d="M20 8L26 1L32 8" />
      </NavIcon>
    ),
  },
  {
    name: 'Look At',
    caret: false,
    icon: (
      <NavIcon>
        <path d="M3 20H48V48H3ZM5 14L38 3L34 13" fill="#f6f6f6" />
        <path d="M13 29H38V39H13Z" fill="#c9d2dc" />
        <path d="M5 14H46" />
      </NavIcon>
    ),
  },
  {
    name: 'Pan',
    caret: false,
    icon: (
      <NavIcon>
        <path d="M18 47Q12 36 3 27Q5 21 12 26L16 30L11 12Q14 6 18 12L22 24L21 6Q25 0 28 6L29 23L34 7Q39 3 40 10L37 26L43 17Q49 15 47 21L40 38L37 47Z" fill="#fff" />
      </NavIcon>
    ),
  },
  {
    name: 'Zoom',
    caret: false,
    icon: (
      <NavIcon>
        <circle cx="16" cy="20" r="12" fill="#dcebf2" />
        <path d="M26 30L40 44" stroke="#36546b" strokeWidth="7" />
        <path d="M42 3V17M35 10H50M35 23H50" />
      </NavIcon>
    ),
  },
  {
    name: 'Fit',
    caret: true,
    icon: (
      <NavIcon>
        <path d="M3 3H48V48H3Z" strokeDasharray="5 4" strokeWidth="2" />
        <circle cx="22" cy="20" r="16" fill="#dcebea" />
        <path d="M34 32L46 46" stroke="#36546b" strokeWidth="7" />
      </NavIcon>
    ),
  },
  {
    name: 'Display Settings',
    caret: true,
    icon: (
      <NavIcon>
        <path d="M3 4H48V38H3Z" fill="#f2f2f2" />
        <path d="M10 11H41V31H10Z" fill="#8fb8e4" stroke="#45688f" />
        <path d="M14 46H38" strokeWidth="5" />
      </NavIcon>
    ),
  },
  {
    name: 'Grid and Snaps',
    caret: true,
    icon: (
      <NavIcon>
        <path d="M3 3H48V48H3ZM12 3V48M21 3V48M30 3V48M39 3V48M3 12H48M3 21H48M3 30H48M3 39H48" fill="#fff" stroke="#666" />
      </NavIcon>
    ),
  },
  {
    name: 'Viewports',
    caret: true,
    icon: (
      <NavIcon>
        <path d="M3 6H23V23H3ZM28 6H48V23H28ZM3 28H23V45H3ZM28 28H48V45H28Z" fill="#a9c8ec" stroke="#3a5f8f" />
        <path d="M9 12H17V17H9ZM34 12H42V17H34ZM9 34H17V39H9ZM34 34H42V39H34Z" stroke="#6a92c4" strokeWidth="2" />
      </NavIcon>
    ),
  },
];

const NavigationBar = () => (
  <div className="flex h-[22px] w-[237px] items-center justify-between bg-[#f1f1f1] pr-1 pl-0.5">
    {navTools.map((tool) => (
      <button key={tool.name} aria-label={tool.name} className="flex items-center gap-0.5">
        {tool.icon}
        {tool.caret && <Caret />}
      </button>
    ))}
  </div>
);

export default function App() {
  return (
    <div className="flex min-h-screen flex-col bg-white">
      <Toolbar />
      <main className="relative flex flex-1 flex-col">
        <Model />
        <div className="relative flex flex-1 items-start justify-between">
          <BrowserPanel />
          <ViewCube />
        </div>
        <div className="relative flex justify-center pr-1.5">
          <NavigationBar />
        </div>
      </main>
    </div>
  );
}
